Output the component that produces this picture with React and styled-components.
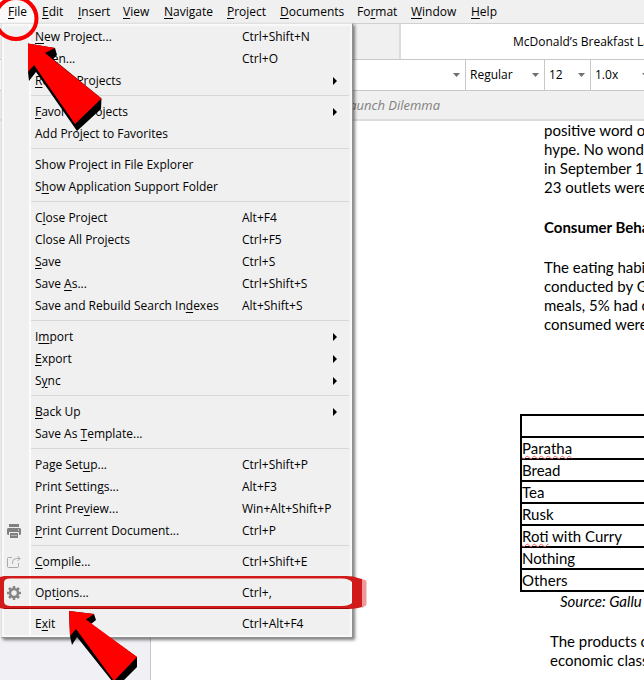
import React from "react";
import styled, { createGlobalStyle } from "styled-components";

const menuBar = [
  ["", "F", "ile", 34],
  ["", "E", "dit", 36],
  ["", "I", "nsert", 45],
  ["", "V", "iew", 41],
  ["", "N", "avigate", 63],
  ["", "P", "roject", 53],
  ["", "D", "ocuments", 77],
  ["Fo", "r", "mat", 54],
  ["", "W", "indow", 60],
  ["", "H", "elp", 41],
];

// label is [before, access key, after]
const groups = [
  [
    { label: ["", "N", "ew Project..."], keys: "Ctrl+Shift+N" },
    { label: ["", "O", "pen..."], keys: "Ctrl+O" },
    { label: ["", "R", "ecent Projects"], sub: true },
  ],
  [
    { label: ["", "F", "avorite Projects"], sub: true },
    { label: ["Add Pro", "j", "ect to Favorites"] },
  ],
  [
    { label: ["Show Project in File Explorer", "", ""] },
    { label: ["S", "h", "ow Application Support Folder"] },
  ],
  [
    { label: ["C", "l", "ose Project"], keys: "Alt+F4" },
    { label: ["Close All Pro", "j", "ects"], keys: "Ctrl+F5" },
    { label: ["", "S", "ave"], keys: "Ctrl+S" },
    { label: ["Save ", "A", "s..."], keys: "Ctrl+Shift+S" },
    { label: ["Save and Rebuild Search In", "d", "exes"], keys: "Alt+Shift+S" },
  ],
  [
    { label: ["I", "m", "port"], sub: true },
    { label: ["", "E", "xport"], sub: true },
    { label: ["S", "y", "nc"], sub: true },
  ],
  [
    { label: ["", "B", "ack Up"], sub: true },
    { label: ["Save As ", "T", "emplate..."] },
  ],
  [
    { label: ["Page Set", "u", "p..."], keys: "Ctrl+Shift+P" },
    { label: ["Print Settin", "g", "s..."], keys: "Alt+F3" },
    { label: ["Print Pre", "v", "iew..."], keys: "Win+Alt+Shift+P" },
    { label: ["", "P", "rint Current Document..."], keys: "Ctrl+P", icon: "print" },
  ],
  [{ label: ["", "C", "ompile..."], keys: "Ctrl+Shift+E", icon: "compile" }],
  [{ label: ["Opt", "i", "ons..."], keys: "Ctrl+,", icon: "gear" }],
  [{ label: ["E", "x", "it"], keys: "Ctrl+Alt+F4" }],
];

const foods = [
  ["", ""],
  ["Paratha", ""],
  ["", "Bread"],
  ["", "Tea"],
  ["", "Rusk"],
  ["Roti", " with Curry"],
  ["", "Nothing"],
  ["", "Others"],
];

const PrintIcon = () => (
  <svg width="16" height="16" viewBox="0 0 16 16" fill="#808080">
    <path d="M3 1h10v3H3z" />
    <path d="M2 5h12l1 1v5l-1 1h-1V9H3v3H2l-1-1V6z" />
    <path d="M4 10h8v5H4z" />
    <path d="M5 12.500h6" stroke="#b5b5b5" />
    <path d="M12 7h1" stroke="#f0f0f0" />
  </svg>
);

const CompileIcon = () => (
  <svg width="16" height="16" viewBox="0 0 16 16" fill="none" stroke="#a9a9a9">
    <path d="M6 3.500H2.500q-1 0-1 1v8q0 1 1 1h9q1 0 1-1V9" />
    <path d="M6.500 10V8.500q0-4 4-4h3.500M11.500 2l2.500 2.500L11.500 7" />
  </svg>
);

const GearIcon = () => (
  <svg width="16" height="16" viewBox="0 0 16 16" fill="none" stroke="#858585">
    <circle cx="8" cy="8" r="4" strokeWidth="2.500" />
    <path
      d="M8 1v2.500M8 12.500V15M1 8h2.500M12.500 8H15M3 3l2 2M11 11l2 2M3 13l2-2M11 5l2-2"
      strokeWidth="2.500"
    />
  </svg>
);

const icons = { print: PrintIcon, compile: CompileIcon, gear: GearIcon };

const Label = ({ parts }) => (
  <span>
    {parts[0]}
    {parts[1] && <u>{parts[1]}</u>}
    {parts[2]}
  </span>
);

const MenuItem = ({ item }) => {
  const Icon = icons[item.icon];
  return (
    <ItemButton type="button" role="menuitem">
      <IconSlot>{Icon && <Icon />}</IconSlot>
      <Label parts={item.label} />
      <span>{item.keys}</span>
      {item.sub && (
        <svg width="4" height="8" viewBox="0 0 4 8">
          <path d="M0 0l4 4-4 4z" />
        </svg>
      )}
    </ItemButton>
  );
};

const DropDown = ({ name, value, width }) => (
  <DropCell $width={width}>
    <DropSelect aria-label={name} defaultValue={value}>
      <option>{value}</option>
    </DropSelect>
    <svg width="7" height="4" viewBox="0 0 7 4" fill="#707070">
      <path d="M0 0h7L3.500 4z" />
    </svg>
  </DropCell>
);

// red marks that lie over the window
const Callouts = () => (
  <Overlay width="400" height="680" viewBox="0 0 400 680">
    <circle cx="16" cy="18.500" r="20.500" fill="none" stroke="#f80000" strokeWidth="4" />
    <path d="M28 43.500L55 48l2 7-4 4 48.500 39.500-.5 10.500-24 22L36 72l-7 9-1-9z" />
    <path
      d="M28 43.500L55 48l-10 5 56.500 45.500L75 124 34 65l-6 7z"
      fill="#ff0000"
    />
    <path d="M69 611l25 3 2 6-5 4 46 33v10l-14 14h-11L77 637l-5 8-2-9z" />
    <path
      d="M69 611l25 3-8 5.500L137 657l-23 24L76 629l-6 7z"
      fill="#ff0000"
    />
    <path
      d="M362 579l3 1q1.500 0 1.500 2v22q0 2-1.500 2l-3 2z"
      fill="#ef9a9a"
    />
    <path
      fillRule="evenodd"
      fill="#d11a1a"
      d="M0 577l4-1h342q8 0 12 2l4 1v28l-4 1q-4 1-10 1H4l-4-1zM10 578.500q-6 0-6 4v19q0 4 6 4.500h332q7 0 10-3v-21q-3-3.500-10-3.500z"
    />
    <path d="M4 608.500h345" stroke="#a00808" />
  </Overlay>
);

const App = () => {
  return (
    <>
      <GlobalStyle />
      <Window>
        <MenuBar>
          {menuBar.map(([before, key, after, width], i) => (
            <BarButton key={i} type="button" $width={width} $open={i === 0}>
              <Label parts={[before, key, after]} />
            </BarButton>
          ))}
        </MenuBar>
        <Tabs>
          <Tab />
          <Tab $active>McDonald’s Breakfast Lau</Tab>
        </Tabs>
        <Toolbar>
          <DropDown name="Font" value="Calibri" width={466} />
          <DropDown name="Style" value="Regular" width={79} />
          <DropDown name="Size" value="12" width={46} />
          <DropDown name="Line spacing" value="1.0x" width={64} />
        </Toolbar>
        <DocHeader>Launch Dilemma</DocHeader>
        <Body>
          <Binder />
          <Editor>
            <Paragraph>
              positive word of
              <br />
              hype. No wonde
              <br />
              in September 19
              <br />
              23 outlets were
            </Paragraph>
            <Heading>Consumer Beha</Heading>
            <Paragraph>
              The eating habi
              <br />
              conducted by G
              <br />
              meals, 5% had o
              <br />
              consumed were
            </Paragraph>
            <FoodTable>
              <tbody>
                {foods.map(([typo, rest], i) => (
                  <tr key={i}>
                    <td>
                      {typo && <Typo>{typo}</Typo>}
                      {rest}
                    </td>
                  </tr>
                ))}
              </tbody>
            </FoodTable>
            <Source>Source: Gallu</Source>
            <Closing>
              The products c
              <br />
              economic class
            </Closing>
          </Editor>
        </Body>
        <Menu role="menu" aria-label="File">
          {groups.map((items, i) => (
            <Group key={i}>
              {items.map((item) => (
                <MenuItem key={item.label.join("")} item={item} />
              ))}
            </Group>
          ))}
        </Menu>
        <Callouts />
      </Window>
    </>
  );
};

const GlobalStyle = createGlobalStyle`
  * {
    box-sizing: border-box;
  }

  body {
    margin: 0;
    background: white;
    color: black;
    font: 12px/16px "Open Sans", "Noto Sans", sans-serif;
  }

  button,
  select {
    margin: 0;
    padding: 0;
    border: none;
    background: none;
    color: inherit;
    font: inherit;
  }

  u {
    text-underline-offset: 2px;
  }
`;

const Window = styled.div`
  position: relative;
  display: flex;
  flex-direction: column;
  min-height: 100vh;
  overflow: hidden;
  white-space: nowrap;
`;

const MenuBar = styled.nav`
  display: flex;
  height: 24px;
  background: #f0f0f0;
  border-bottom: 1px solid #d0d0d0;
`;

const BarButton = styled.button`
  width: ${(props) => props.$width}px;
  padding-left: 8px;
  text-align: left;
  background: ${(props) => (props.$open ? "#fafafa" : "none")};
`;

const Tabs = styled.div`
  display: flex;
  height: 36px;
  border-bottom: 1px solid #c8c8c8;
`;

const Tab = styled.div`
  display: flex;
  align-items: center;
  flex: ${(props) => (props.$active ? "1 0 auto" : "0 0 401px")};
  padding-left: ${(props) => (props.$active ? "112px" : "0")};
  background: ${(props) => (props.$active ? "white" : "#f0f0f0")};
  border-right: ${(props) => (props.$active ? "none" : "2px solid #dcdcdc")};
`;

const Toolbar = styled.div`
  display: flex;
  height: 31px;
  border-bottom: 1px solid #c8c8c8;
`;

const DropCell = styled.div`
  display: grid;
  flex: 0 0 ${(props) => props.$width}px;
  align-items: center;
  border-right: 1px solid #c8c8c8;

  > * {
    grid-area: 1 / 1;
  }

  svg {
    justify-self: end;
    margin-right: 5px;
    pointer-events: none;
  }
`;

const DropSelect = styled.select`
  appearance: none;
  width: 100%;
  height: 100%;
  padding-left: 4px;
`;

const DocHeader = styled.div`
  height: 30px;
  padding-left: 343px;
  background: #f0f0f0;
  border-bottom: 2px solid #dcdcdc;
  color: #808080;
  font-size: 13px;
  font-style: italic;
  line-height: 28px;
`;

const Body = styled.div`
  display: flex;
  flex: 1;
`;

const Binder = styled.aside`
  flex: 0 0 151px;
  background: #f0f0f5;
  border-right: 1px solid #c8c8c8;
`;

const Editor = styled.main`
  flex: 1;
  min-width: 0;
  padding: 0 0 8px 369px;
  font: 15px/19px Lato, sans-serif;
`;

const Paragraph = styled.p`
  margin: 0 0 21px 24px;
`;

const Heading = styled.h2`
  margin: 0 0 21px 24px;
  font-size: 15px;
  font-weight: bold;
`;

const FoodTable = styled.table`
  width: 480px;
  margin-top: 80px;
  border-collapse: collapse;

  td {
    height: 22px;
    padding: 0;
    border: 2px solid black;
  }
`;

const Typo = styled.span`
  text-decoration: underline wavy #f06060 1px;
  text-decoration-skip-ink: none;
  text-underline-offset: 1px;
`;

const Source = styled.p`
  margin: 0 0 21px 40px;
  font-style: italic;
`;

const Closing = styled.p`
  margin: 0 0 0 30px;
`;

const Menu = styled.div`
  position: absolute;
  top: 23px;
  left: 1px;
  width: 352px;
  padding: 2px 3px;
  background: linear-gradient(to right, #f0f0f0 27px, #fcfcfc 27px, #fcfcfc 29px, #f0f0f0 29px);
  border: 1px solid #e0e0e0;
  border-right-color: #909090;
  border-bottom-color: #909090;
  box-shadow: inset 0 0 0 2px #f9f9f9, 2px 2px 3px rgba(0, 0, 0, 0.5);
`;

const Group = styled.div`
  & + &::before {
    content: "";
    display: block;
    height: 1px;
    margin: 3px 0 5px 26px;
    background: #d7d7d7;
  }
`;

const ItemButton = styled.button`
  display: grid;
  grid-template-columns: 30px 207px 91px 4px;
  align-items: center;
  width: 100%;
  height: 22px;
  text-align: left;
`;

const IconSlot = styled.span`
  display: flex;
  padding-left: 1px;
`;

const Overlay = styled.svg`
  position: absolute;
  top: 0;
  left: 0;
  pointer-events: none;
`;

export default App;
